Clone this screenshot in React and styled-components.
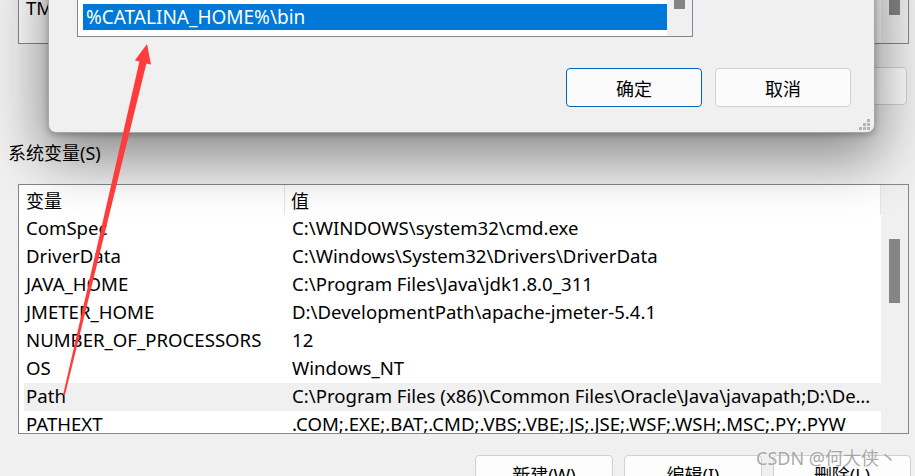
import React from 'react';
import styled, { createGlobalStyle } from 'styled-components';

const GlobalStyle = createGlobalStyle`
  html, body {
    margin: 0;
    padding: 0;
    background: #f0f0f0;
    overflow: hidden;
  }
  body {
    font-family: "Noto Sans", "Noto Sans CJK SC", sans-serif;
    color: #000;
  }
`;

const sysVars = [
  ['ComSpec', 'C:\\WINDOWS\\system32\\cmd.exe'],
  ['DriverData', 'C:\\Windows\\System32\\Drivers\\DriverData'],
  ['JAVA_HOME', 'C:\\Program Files\\Java\\jdk1.8.0_311'],
  ['JMETER_HOME', 'D:\\DevelopmentPath\\apache-jmeter-5.4.1'],
  ['NUMBER_OF_PROCESSORS', '12'],
  ['OS', 'Windows_NT'],
  ['Path', 'C:\\Program Files (x86)\\Common Files\\Oracle\\Java\\javapath;D:\\DevelopmentPath\\apache-maven-3.8.4\\bin', true],
  ['PATHEXT', '.COM;.EXE;.BAT;.CMD;.VBS;.VBE;.JS;.JSE;.WSF;.WSH;.MSC;.PY;.PYW'],
];

const App = () => {
  return (
    <Page>
      <GlobalStyle />
      <Window>
        <ListBox $height={74} $top={-30}>
          <Rows $bottomPad={20}>
            <Row><Cell $w={261}>TEMP</Cell><Cell>%USERPROFILE%\AppData\Local\Temp</Cell></Row>
            <Row><Cell $w={261}>TMP</Cell><Cell>%USERPROFILE%\AppData\Local\Temp</Cell></Row>
          </Rows>
          <ScrollTrack>
            <Thumb $top={0} $h={44} />
          </ScrollTrack>
        </ListBox>
        <ButtonRow $top={23} $inset={4}>
          <WinButton>新建(N)</WinButton>
          <WinButton>编辑(E)</WinButton>
          <WinButton>删除(D)</WinButton>
        </ButtonRow>
        <GroupLabel>系统变量(S)</GroupLabel>
        <ListBox $height={250} $top={19}>
          <Rows>
            <Header>
              <HeadCell $w={261}>变量</HeadCell>
              <HeadCell $last>值</HeadCell>
            </Header>
            {sysVars.map(([name, value, sel]) => (
              <Row key={name} $selected={sel}>
                <Cell $w={261}>{name}</Cell>
                <Cell>{value}</Cell>
              </Row>
            ))}
          </Rows>
          <ScrollTrack>
            <Thumb $top={54} $h={64} />
          </ScrollTrack>
        </ListBox>
        <ButtonRow $top={21} $inset={0}>
          <WinButton>新建(W)</WinButton>
          <WinButton>编辑(I)</WinButton>
          <WinButton>删除(L)</WinButton>
        </ButtonRow>
      </Window>

      <Dialog>
        <EditList>
          <EditItems>
            <EditItem $selected>%CATALINA_HOME%\bin</EditItem>
          </EditItems>
          <EditScroll>
            <EditThumb />
          </EditScroll>
        </EditList>
        <DialogButtons>
          <DlgButton $primary>确定</DlgButton>
          <DlgButton>取消</DlgButton>
        </DialogButtons>
        <Grip width="12" height="12" viewBox="0 0 12 12">
          <rect x="8" y="0" width="3" height="3" fill="#b4b4b4" />
          <rect x="4" y="4" width="3" height="3" fill="#b4b4b4" />
          <rect x="8" y="4" width="3" height="3" fill="#b4b4b4" />
          <rect x="0" y="8" width="3" height="3" fill="#b4b4b4" />
          <rect x="4" y="8" width="3" height="3" fill="#b4b4b4" />
          <rect x="8" y="8" width="3" height="3" fill="#b4b4b4" />
        </Grip>
      </Dialog>

      <Arrow width="915" height="476" viewBox="0 0 915 476">
        <polygon
          points="147,44 151,64.5 146.4,63.4 64.9,395.3 63.1,394.8 139.4,61.6 134.8,60.6"
          fill="#ff3c3c"
        />
      </Arrow>

      <Watermark>CSDN @何大侠丶</Watermark>
    </Page>
  );
};

const Page = styled.div`
  position: relative;
  width: 915px;
  height: 476px;
  overflow: hidden;
  background: #f0f0f0;
`;

const Window = styled.div`
  display: flex;
  flex-direction: column;
  padding: 0 4px 0 8px;
`;

const ListBox = styled.div`
  box-sizing: border-box;
  display: flex;
  height: ${p => p.$height}px;
  margin: ${p => p.$top}px 2px 0 10px;
  border: 1px solid #828790;
  background: #fff;
  overflow: hidden;
`;

const Rows = styled.div`
  flex: 1;
  min-width: 0;
  display: flex;
  flex-direction: column;
  justify-content: ${p => (p.$bottomPad ? 'flex-end' : 'flex-start')};
  padding: 0 0 ${p => p.$bottomPad || 0}px 5px;
  overflow: hidden;
`;

const Header = styled.div`
  display: flex;
  flex: none;
  height: 30px;
  align-items: center;
`;

const HeadCell = styled.div`
  box-sizing: border-box;
  height: 100%;
  display: flex;
  align-items: center;
  font-size: 18px;
  padding-left: ${p => (p.$last ? 6 : 2)}px;
  border-right: 1px solid #e5e5e5;
  ${p => (p.$w ? `width: ${p.$w}px;` : 'flex: 1;')}
`;

const Row = styled.div`
  display: flex;
  flex: none;
  height: 28px;
  align-items: center;
  background: ${p => (p.$selected ? '#f0f0f0' : 'transparent')};
`;

const Cell = styled.div`
  box-sizing: border-box;
  font-size: 18.6px;
  line-height: 26px;
  margin-bottom: 2px;
  white-space: nowrap;
  overflow: hidden;
  text-overflow: ellipsis;
  padding-left: ${p => (p.$w ? 2 : 7)}px;
  padding-right: 6px;
  ${p => (p.$w ? `width: ${p.$w}px; flex: none;` : 'flex: 1; min-width: 0;')}
`;

const ScrollTrack = styled.div`
  position: relative;
  flex: none;
  width: 27px;
  background: #f0f0f0;
`;

const Thumb = styled.div`
  position: absolute;
  left: 8px;
  top: ${p => p.$top}px;
  width: 11px;
  height: ${p => p.$h}px;
  background: #858585;
`;

const ButtonRow = styled.div`
  display: flex;
  justify-content: flex-end;
  gap: 11px;
  margin-top: ${p => p.$top}px;
  padding-right: ${p => p.$inset}px;
`;

const WinButton = styled.button`
  box-sizing: border-box;
  width: 138px;
  height: 38px;
  border: 1px solid #d0d0d0;
  border-radius: 4px;
  background: #fdfdfd;
  font-family: "Noto Sans", "Noto Sans CJK SC", sans-serif;
  font-size: 18px;
  color: #000;
  padding: 0;
`;

const GroupLabel = styled.div`
  margin-top: 36px;
  height: 24px;
  line-height: 24px;
  font-size: 18px;
`;

const Dialog = styled.div`
  position: absolute;
  left: 48px;
  top: -50px;
  width: 827px;
  box-sizing: border-box;
  display: flex;
  flex-direction: column;
  padding: 0 23px 25px 28px;
  background: #f0f0f0;
  border: 1px solid #a6a6a6;
  border-radius: 8px;
  box-shadow: 0 20px 55px 6px rgba(0, 0, 0, 0.42), 0 2px 6px rgba(0, 0, 0, 0.25);
`;

const EditList = styled.div`
  box-sizing: border-box;
  display: flex;
  height: 86px;
  width: 616px;
  border: 1px solid #828790;
  background: #fff;
`;

const EditItems = styled.div`
  flex: 1;
  display: flex;
  flex-direction: column;
  justify-content: flex-end;
  padding: 0 0 6px 5px;
`;

const EditItem = styled.div`
  height: 26px;
  line-height: 26px;
  padding-left: 3px;
  font-size: 19px;
  color: ${p => (p.$selected ? '#fff' : '#000')};
  background: ${p => (p.$selected ? '#0078d7' : 'transparent')};
`;

const EditScroll = styled.div`
  position: relative;
  width: 25px;
  background: #f0f0f0;
`;

const EditThumb = styled.div`
  position: absolute;
  left: 7px;
  bottom: 27px;
  width: 11px;
  height: 40px;
  background: #858585;
`;

const DialogButtons = styled.div`
  display: flex;
  justify-content: flex-end;
  gap: 13px;
  margin-top: 31px;
`;

const DlgButton = styled.button`
  box-sizing: border-box;
  width: 136px;
  height: 39px;
  border: 1px solid ${p => (p.$primary ? '#0067c0' : '#d0d0d0')};
  border-radius: 4px;
  background: #fbfbfb;
  font-family: "Noto Sans CJK SC", sans-serif;
  font-size: 18px;
  color: #000;
  padding: 0;
`;

const Grip = styled.svg`
  position: absolute;
  right: 3px;
  bottom: 1px;
`;

const Arrow = styled.svg`
  position: absolute;
  left: 0;
  top: 0;
  pointer-events: none;
`;

const Watermark = styled.div`
  position: absolute;
  right: 18px;
  bottom: 6px;
  font-family: "Noto Sans", "Noto Sans CJK SC", sans-serif;
  font-size: 18px;
  color: rgba(140, 140, 140, 0.75);
  text-shadow: 0 0 1px rgba(255, 255, 255, 0.8);
  pointer-events: none;
`;

export default App;
